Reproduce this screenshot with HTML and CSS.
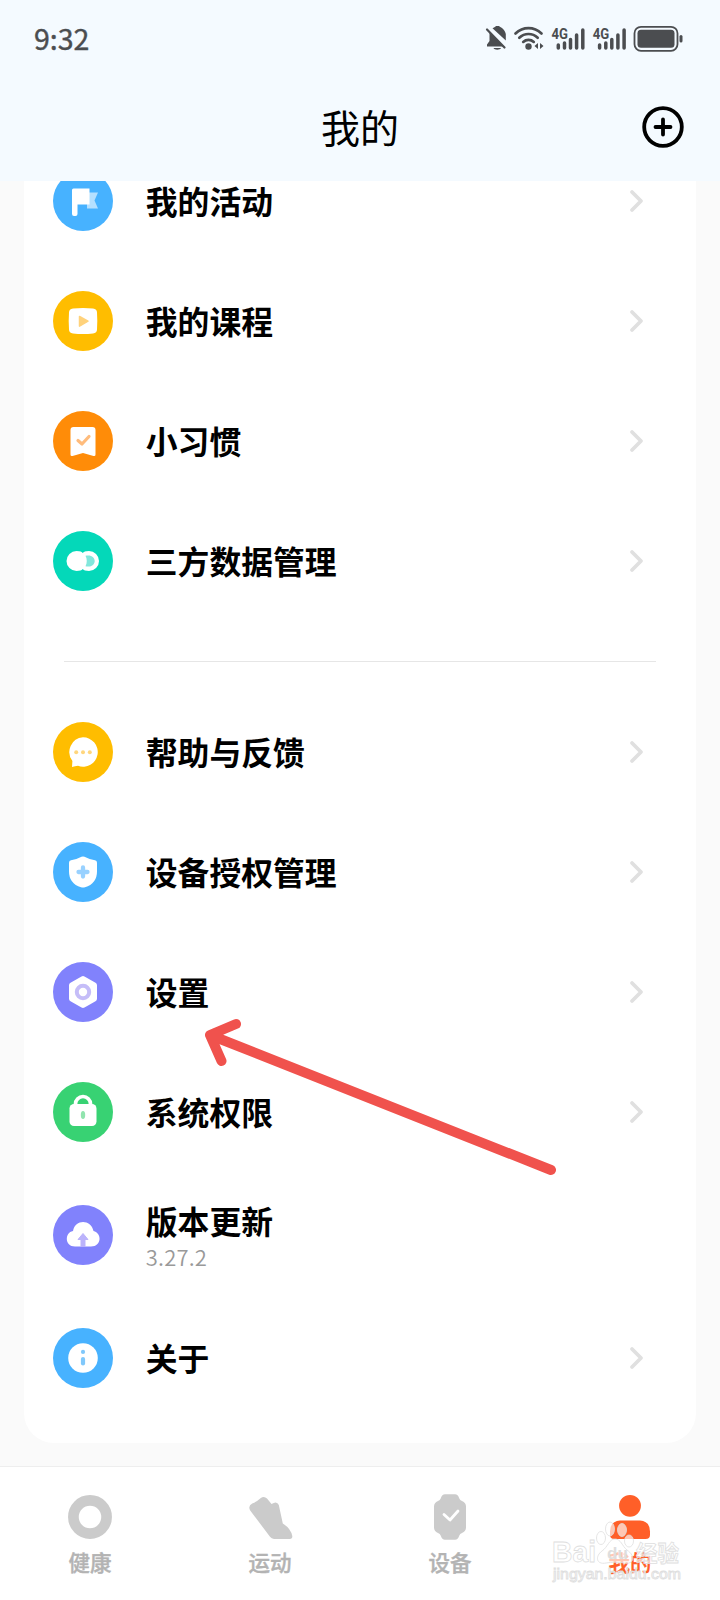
FILE: index.html
```html
<!DOCTYPE html>
<html lang="zh-CN">
<head>
<meta charset="utf-8">
<title>我的</title>
<link rel="stylesheet" href="styles.css">
</head>
<body>
<div class="phone">
  <header class="header">
    <div class="status">
      <span class="time">9:32</span>
      <svg class="status-icons" width="204" height="36" viewBox="0 0 204 36" fill="none">
        <g fill="#4b4d50">
          <path d="M3 27.500v-2l2.500-3.500v-9l14 14.500zM8.500 9.200c1.500-.8 2.500-.7 3.500-2.200h3c1 1.500 5.500 2 6.800 8v6.500zM9.500 29h7.500c-.7 2.300-6.800 2.300-7.500 0z"/>
          <circle cx="44.500" cy="27.500" r="3.200"/>
          <path d="M54 24v6l-3.500-3zM56 24v6l3.500-3z"/>
        </g>
        <path d="M3 10.500l17.500 18" stroke="#4b4d50" stroke-width="2.200" stroke-linecap="round"/>
        <g stroke="#4b4d50" stroke-width="2.700" stroke-linecap="round">
          <path d="M31.500 14.500c7.500-7.300 18.500-7.300 26 0M35.300 18.800c5.300-5.100 13.100-5.100 18.400 0M39.200 22.900c3-2.700 7.600-2.700 10.600 0"/>
        </g>
        <g stroke="#4b4d50" stroke-width="3.500" stroke-linecap="round">
          <path d="M74.300 26v3M80.500 24v5M86.500 20.500v8.500M92.600 16v13M98.800 11v18"/>
          <path d="M115.600 26v3M121.800 24v5M127.800 20.500v8.500M133.900 16v13M140.100 11v18"/>
        </g>
        <text class="net" x="67.500" y="19.500" textLength="16.500" lengthAdjust="spacingAndGlyphs">4G</text>
        <text class="net" x="108.800" y="19.500" textLength="16.500" lengthAdjust="spacingAndGlyphs">4G</text>
        <rect x="150.500" y="7.800" width="43" height="24" rx="6.500" stroke="#4b4d50" stroke-width="1.800"/>
        <rect x="153.500" y="10.800" width="37" height="18" rx="3.500" fill="#4b4d50"/>
        <rect x="195.500" y="16" width="3" height="7.500" rx="1.500" fill="#4b4d50"/>
      </svg>
    </div>
    <div class="titlebar">
      <span></span>
      <h1 class="title">我的</h1>
      <svg class="add" width="42" height="42" viewBox="0 0 42 42" fill="none" stroke="#000" stroke-width="3.800" stroke-linecap="round"><circle cx="21" cy="21" r="18.800"/><path d="M13.500 21h15M21 13.500v15"/></svg>
    </div>
  </header>

  <main class="content">
    <section class="card">
      <div class="row">
        <svg class="icon" viewBox="0 0 60 60"><circle cx="30" cy="30" r="30" fill="#47b2ff"/><path d="M34 21.500h11l-3.500 8 3.500 8H34z" fill="#b5e0ff"/><path d="M20.500 17.500h16v16H24.500v9.500a2 2 0 0 1-2 2h-1.500a2 2 0 0 1-2-2V19a1.500 1.500 0 0 1 1.500-1.500z" fill="#fff"/></svg>
        <span class="label">我的活动</span>
        <svg class="arrow" viewBox="0 0 16 24"><path d="M3 3l9 9-9 9"/></svg>
      </div>
      <div class="row">
        <svg class="icon" viewBox="0 0 60 60"><circle cx="30" cy="30" r="30" fill="#ffbd00"/><path d="M20 17.500q10-1.200 20 0 4 .5 4 4 .6 8.500 0 17 0 3.500-4 4-10 1.200-20 0-4-.5-4-4-.6-8.500 0-17 0-3.500 4-4z" fill="#fff"/><path d="M26.500 25.500l8.500 4.700-8.500 5z" fill="#ffd27b" stroke="#ffd27b" stroke-width="1.500" stroke-linejoin="round"/></svg>
        <span class="label">我的课程</span>
        <svg class="arrow" viewBox="0 0 16 24"><path d="M3 3l9 9-9 9"/></svg>
      </div>
      <div class="row">
        <svg class="icon" viewBox="0 0 60 60"><circle cx="30" cy="30" r="30" fill="#ff8c08"/><path d="M20.500 16h19a3 3 0 0 1 3 3v24.500q0 2-2 1.500L30 42l-10.500 3q-2 .5-2-1.500V19a3 3 0 0 1 3-3z" fill="#fff"/><path d="M25 29.500l4 3.500 7-7.500" fill="none" stroke="#ffbc7c" stroke-width="3.200" stroke-linecap="round" stroke-linejoin="round"/></svg>
        <span class="label">小习惯</span>
        <svg class="arrow" viewBox="0 0 16 24"><path d="M3 3l9 9-9 9"/></svg>
      </div>
      <div class="row">
        <svg class="icon" viewBox="0 0 60 60"><circle cx="30" cy="30" r="30" fill="#04d8b9"/><circle cx="23.500" cy="30" r="10" fill="#fff"/><path d="M24 20.500h12v19H24z" fill="#fff"/><circle cx="36" cy="30" r="10" fill="#fff"/><path d="M32.500 24.800c6-1.200 9.200 1.700 9.200 5.200s-3.200 6.600-9.200 5.300c1.700-3 1.700-7.500 0-10.500z" fill="#83e7dc"/><path d="M27.500 20h4.500l-2.200 2zM27.500 40h4.500l-2.200-2z" fill="#04d8b9"/></svg>
        <span class="label">三方数据管理</span>
        <svg class="arrow" viewBox="0 0 16 24"><path d="M3 3l9 9-9 9"/></svg>
      </div>

      <hr class="divider">

      <div class="row">
        <svg class="icon" viewBox="0 0 60 60"><circle cx="30" cy="30" r="30" fill="#ffbd00"/><path d="M30 15.300a14.700 14.700 0 1 1-5 28.500q-3 .5-6 1.300l.4-6.200A14.700 14.700 0 0 1 30 15.300z" fill="#fff"/><g fill="#ffd67d"><circle cx="23.200" cy="30.300" r="2"/><circle cx="30" cy="30.300" r="2"/><circle cx="36.800" cy="30.300" r="2"/></g></svg>
        <span class="label">帮助与反馈</span>
        <svg class="arrow" viewBox="0 0 16 24"><path d="M3 3l9 9-9 9"/></svg>
      </div>
      <div class="row">
        <svg class="icon" viewBox="0 0 60 60"><circle cx="30" cy="30" r="30" fill="#47b2ff"/><path d="M28.500 14.700q1.500-.6 3 0 5 2.700 10.500 3.600 2 .4 2 2.500v8.700q0 12-12 15.800-2 .6-4 0Q16 41.500 16 29.500v-8.700q0-2.100 2-2.500 5.500-.9 10.500-3.600z" fill="#fff"/><path d="M30 25.500v9M25.500 30h9" stroke="#98d1ff" stroke-width="4.300" stroke-linecap="round"/></svg>
        <span class="label">设备授权管理</span>
        <svg class="arrow" viewBox="0 0 16 24"><path d="M3 3l9 9-9 9"/></svg>
      </div>
      <div class="row">
        <svg class="icon" viewBox="0 0 60 60"><circle cx="30" cy="30" r="30" fill="#8182fc"/><path d="M30 17l11 6.300v13.400L30 43l-11-6.300V23.300z" fill="#fff" stroke="#fff" stroke-width="6" stroke-linejoin="round"/><circle cx="30" cy="30" r="6.200" fill="none" stroke="#c5bdf8" stroke-width="4"/></svg>
        <span class="label">设置</span>
        <svg class="arrow" viewBox="0 0 16 24"><path d="M3 3l9 9-9 9"/></svg>
      </div>
      <div class="row">
        <svg class="icon" viewBox="0 0 60 60"><circle cx="30" cy="30" r="30" fill="#38d273"/><path d="M22.500 24v-2a7.500 7.500 0 0 1 15 0v2" fill="none" stroke="#fff" stroke-width="3.700"/><rect x="16.500" y="22" width="27" height="22" rx="4.500" fill="#fff"/><ellipse cx="30" cy="33" rx="2.200" ry="4" fill="#91e4ae"/></svg>
        <span class="label">系统权限</span>
        <svg class="arrow" viewBox="0 0 16 24"><path d="M3 3l9 9-9 9"/></svg>
      </div>
      <div class="row row-version">
        <svg class="icon" viewBox="0 0 60 60"><circle cx="30" cy="30" r="30" fill="#8182fc"/><path d="M22 41.500c-10.500 0-10.500-14-2-15.500 2-12 18-12 20.500 0 8.500 2 8.500 15.500-2.500 15.500z" fill="#fff"/><path d="M30 28.500l5 6H32v7h-4v-7h-3z" fill="#bbb3fb" stroke="#bbb3fb" stroke-linejoin="round"/></svg>
        <span class="label">版本更新<small class="version">3.27.2</small></span>
      </div>
      <div class="row">
        <svg class="icon" viewBox="0 0 60 60"><circle cx="30" cy="30" r="30" fill="#47b2ff"/><circle cx="30" cy="30" r="14.800" fill="#fff"/><circle cx="30" cy="23.900" r="2.100" fill="#80c8fb"/><path d="M30 31v4.500" stroke="#80c8fb" stroke-width="4.200" stroke-linecap="round"/></svg>
        <span class="label">关于</span>
        <svg class="arrow" viewBox="0 0 16 24"><path d="M3 3l9 9-9 9"/></svg>
      </div>
    </section>
  </main>

  <nav class="tabs">
    <div class="tab">
      <svg width="48" height="48" viewBox="0 0 48 48"><circle cx="24" cy="24" r="16.600" fill="none" stroke="#cbcbcb" stroke-width="10.700"/></svg>
      <span>健康</span>
    </div>
    <div class="tab">
      <svg width="48" height="48" viewBox="0 0 48 48"><path d="M4.200 17.500q-2.500-4.500 2-7 4.300-1.600 8.300-5.300 3.500-2.700 6.500.3l4.500 5.500q5.500-3.500 7.300 1l4 18.500q8 5 9.500 12.500.3 3-2.500 3H28q-2.500-.3-4-2.300z" fill="#cbcbcb"/></svg>
      <span>运动</span>
    </div>
    <div class="tab">
      <svg width="48" height="48" viewBox="0 0 48 48"><path d="M19 1.300h10q3 0 4.200 4 .7 2 2.800 2.700 4 1.600 4 5.500v21q0 3.900-4 5.500-2.100.7-2.800 2.700-1.200 4-4.200 4H19q-3 0-4.200-4-.7-2-2.800-2.700-4-1.600-4-5.500v-21Q8 9.600 12 8q2.100-.7 2.800-2.700 1.200-4 4.200-4z" fill="#cbcbcb"/><path d="M18 21.500l6 5.500 8-9" fill="none" stroke="#fff" stroke-width="2.800" stroke-linecap="round" stroke-linejoin="round"/></svg>
      <span>设备</span>
    </div>
    <div class="tab tab-active">
      <svg width="48" height="48" viewBox="0 0 48 48" fill="#ff5f28"><circle cx="24" cy="12.800" r="10.900"/><path d="M14 27.500h20q10 .8 10 11v3.500q0 4-4.500 4h-31q-4.500 0-4.500-4v-3.500q0-10.200 10-11z"/></svg>
      <span>我的</span>
    </div>
  </nav>

  <svg class="watermark" width="136" height="66" viewBox="0 0 136 66">
    <text class="wm-main" x="3" y="42" textLength="44" lengthAdjust="spacingAndGlyphs">Bai</text>
    <text class="wm-main wm-cn" x="87" y="40.500" textLength="43" lengthAdjust="spacingAndGlyphs">经验</text>
    <g class="wm-paw"><ellipse cx="61" cy="9" rx="4.500" ry="7"/><ellipse cx="73" cy="10" rx="4.500" ry="6.500"/><ellipse cx="52" cy="18" rx="4.500" ry="6.500"/><ellipse cx="80" cy="21" rx="4.500" ry="6"/><path d="M66 19c6 0 7 7 12 11 9 6 7 15-3 13-6-1-12-1-18 0-10 2-11-7-4-12 6-4 7-12 13-12z"/></g>
    <text class="wm-du" x="58" y="39">du</text>
    <text class="wm-url" x="4" y="59" textLength="128" lengthAdjust="spacingAndGlyphs">jingyan.baidu.com</text>
  </svg>

  <svg class="pointer" width="356" height="166" viewBox="0 0 356 166"><path d="M351 155L10 20M36 9L10 20l11.500 26" fill="none" stroke="#f0524d" stroke-width="10" stroke-linecap="round" stroke-linejoin="round"/></svg>
</div>
</body>
</html>
```
FILE: styles.css
```css
* { box-sizing: border-box; }

body {
  margin: 0;
  background: #fafafa;
  font-family: "Noto Sans CJK SC", "Noto Sans", sans-serif;
  color: #000;
}

.phone {
  position: relative;
  display: flex;
  flex-direction: column;
  width: 720px;
  height: 1600px;
  overflow: hidden;
}

.header {
  flex: 0 0 181px;
  background: #f4faff;
}

.status {
  display: flex;
  justify-content: space-between;
  align-items: center;
  height: 76px;
  padding: 0 32px 2px 34px;
}

.time {
  padding-top: 1px;
  font-size: 28.5px;
  line-height: 40px;
  color: #4b4d50;
  -webkit-text-stroke: 0.4px #4b4d50;
}

.net {
  font: bold 15px "Roboto", sans-serif;
  fill: #4b4d50;
}

.titlebar {
  display: grid;
  grid-template-columns: 42px 1fr 42px;
  align-items: center;
  height: 102px;
  padding: 0 36.500px 0 36.500px;
}

.title {
  margin: 0;
  padding-bottom: 2px;
  font-size: 39px;
  font-weight: 400;
  line-height: 58px;
  text-align: center;
}

.content {
  flex: 0 0 1285px;
  padding: 0 24px;
  overflow: hidden;
}

.card {
  margin-top: -40px;
  padding-bottom: 25px;
  background: #fff;
  border-radius: 0 0 30px 30px;
}

.row {
  display: flex;
  align-items: center;
  height: 120px;
  padding: 0 51px 0 29.300px;
}

.icon {
  flex: none;
  width: 60px;
  height: 60px;
}

.label {
  flex: 1;
  padding: 0 0 3px 32.500px;
  font-size: 31.800px;
  font-weight: 700;
  line-height: 44px;
}

.arrow {
  flex: none;
  width: 16px;
  height: 24px;
  fill: none;
  stroke: #e0e0e0;
  stroke-width: 3.800;
  stroke-linecap: round;
  stroke-linejoin: round;
}

.divider {
  height: 1px;
  margin: 40px 40px 30px;
  border: 0;
  background: #e6e6e6;
}

.row-version { height: 126px; }

.version {
  display: block;
  font-size: 22px;
  font-weight: 350;
  letter-spacing: 0.2px;
  line-height: 28px;
  color: #999;
}

.tabs {
  display: grid;
  grid-template-columns: repeat(4, 1fr);
  flex: 1;
  background: #fff;
  border-top: 1px solid #eee;
}

.tab {
  display: flex;
  flex-direction: column;
  align-items: center;
  padding-top: 26px;
  font-size: 21.5px;
  font-weight: 500;
  line-height: 32px;
  color: #b3b3b3;
  -webkit-text-stroke: 0.4px;
}

.tab span { margin-top: 4.5px; }

.tab-active { color: #ff5f28; }

/* Overlays above the page content */
.watermark {
  position: absolute;
  left: 549px;
  top: 1520px;
}

.wm-main, .wm-url, .wm-paw {
  fill: rgba(255, 255, 255, 0.65);
  stroke: #dedede;
  stroke-width: 0.8;
}

.wm-main { font: bold 30px "Liberation Sans", sans-serif; }
.wm-cn { font-family: "Noto Sans CJK SC", sans-serif; font-size: 22px; }
.wm-url { font: 14px "Liberation Sans", sans-serif; }
.wm-du { font: bold 17px "Liberation Sans", sans-serif; fill: #dedede; }

.pointer {
  position: absolute;
  left: 200px;
  top: 1015px;
}
```
